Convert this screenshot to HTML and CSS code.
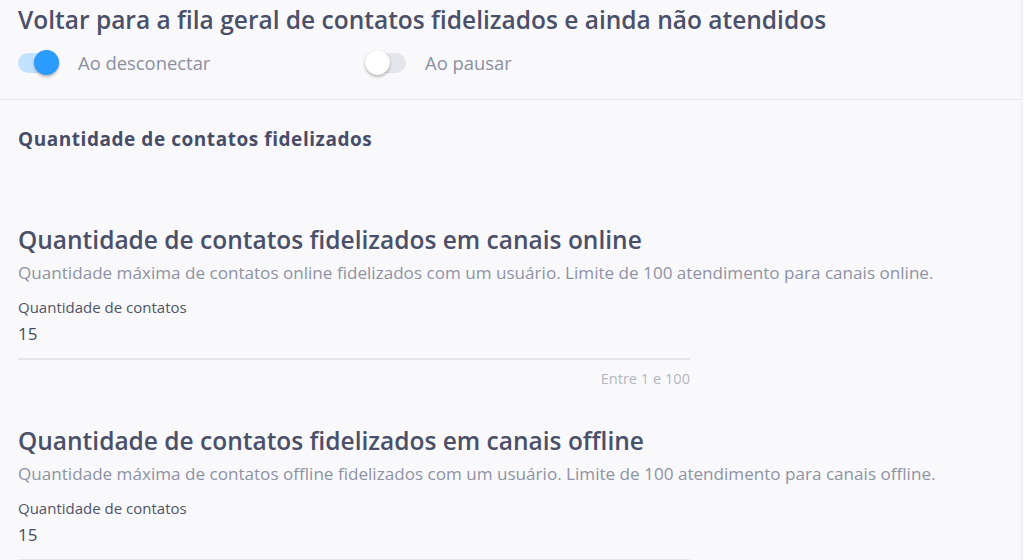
FILE: index.html
```html
<!DOCTYPE html>
<html lang="pt-BR">
<head>
<meta charset="utf-8">
<title>Fidelização</title>
<link rel="stylesheet" href="styles.css">
</head>
<body>
<div class="page">
  <section class="top">
    <h1 class="title">Voltar para a fila geral de contatos fidelizados e ainda não atendidos</h1>
    <div class="toggles">
      <label class="toggle-item">
        <span class="switch on"><span class="track"></span><span class="thumb"></span></span>
        <span class="toggle-label">Ao desconectar</span>
      </label>
      <label class="toggle-item">
        <span class="switch"><span class="track"></span><span class="thumb"></span></span>
        <span class="toggle-label">Ao pausar</span>
      </label>
    </div>
  </section>
  <section class="main">
    <h2 class="subtitle">Quantidade de contatos fidelizados</h2>

    <div class="block">
      <h3 class="heading">Quantidade de contatos fidelizados em canais online</h3>
      <p class="desc">Quantidade máxima de contatos online fidelizados com um usuário. Limite de 100 atendimento para canais online.</p>
      <div class="field">
        <div class="field-label">Quantidade de contatos</div>
        <div class="field-value">15</div>
        <div class="hint">Entre 1 e 100</div>
      </div>
    </div>

    <div class="block">
      <h3 class="heading">Quantidade de contatos fidelizados em canais offline</h3>
      <p class="desc">Quantidade máxima de contatos offline fidelizados com um usuário. Limite de 100 atendimento para canais offline.</p>
      <div class="field">
        <div class="field-label">Quantidade de contatos</div>
        <div class="field-value">15</div>
      </div>
    </div>
  </section>
</div>
</body>
</html>
```

FILE: styles.css
```css
* { box-sizing: border-box; }
html, body {
  margin: 0;
  padding: 0;
  background: #f9f9fc;
  font-family: "Open Sans", "Liberation Sans", sans-serif;
  overflow: hidden;
}
.page {
  width: 1022px;
  height: 560px;
  border-right: 1px solid #ececf1;
}
.top {
  padding: 5px 18px 23px;
  border-bottom: 1px solid #e6e6ec;
}
.title {
  margin: 0;
  font-size: 24.5px;
  line-height: 30px;
  font-weight: 600;
  color: #4a5069;
}
.toggles {
  display: flex;
  margin-top: 13px;
  height: 28px;
}
.toggle-item {
  display: flex;
  align-items: center;
  gap: 19px;
  width: 347px;
}
.switch {
  position: relative;
  width: 41px;
  height: 25px;
  flex: none;
}
.track {
  position: absolute;
  left: 0;
  right: 0;
  top: 3px;
  height: 20px;
  border-radius: 10px;
  background: #e4e5ea;
}
.thumb {
  position: absolute;
  top: 0;
  left: 0;
  width: 25px;
  height: 25px;
  border-radius: 50%;
  background: #ffffff;
  box-shadow: 0 2px 3px rgba(0,0,0,0.25), 0 0 1px rgba(0,0,0,0.15);
}
.switch.on .track { background: #c3e2ff; }
.switch.on .thumb {
  left: auto;
  right: 0;
  background: #2a9bff;
}
.toggle-label {
  font-size: 18.4px;
  color: #8b8fa2;
}
.main {
  padding: 27px 18px 0;
}
.subtitle {
  margin: 0;
  font-size: 19px;
  line-height: 24px;
  font-weight: 700;
  color: #474d68;
  letter-spacing: 0.55px;
}
.block { margin-top: 74px; }
.block + .block { margin-top: 39px; }
.heading {
  margin: 0;
  font-size: 24.5px;
  line-height: 30px;
  font-weight: 600;
  color: #4a5069;
}
.desc {
  margin: 6px 0 0;
  font-size: 17.1px;
  line-height: 24px;
  color: #8e92a5;
}
.field {
  width: 672px;
  margin-top: 12px;
}
.field-label {
  font-size: 15px;
  line-height: 20px;
  color: #4f5468;
  font-weight: 500;
}
.field-value {
  margin-top: 5px;
  padding-bottom: 12px;
  font-size: 17px;
  line-height: 24px;
  color: #464b5e;
  border-bottom: 2px solid #e6e6ea;
}
.hint {
  margin-top: 9px;
  text-align: right;
  font-size: 14.6px;
  line-height: 18px;
  color: #b3b6c1;
}
```
